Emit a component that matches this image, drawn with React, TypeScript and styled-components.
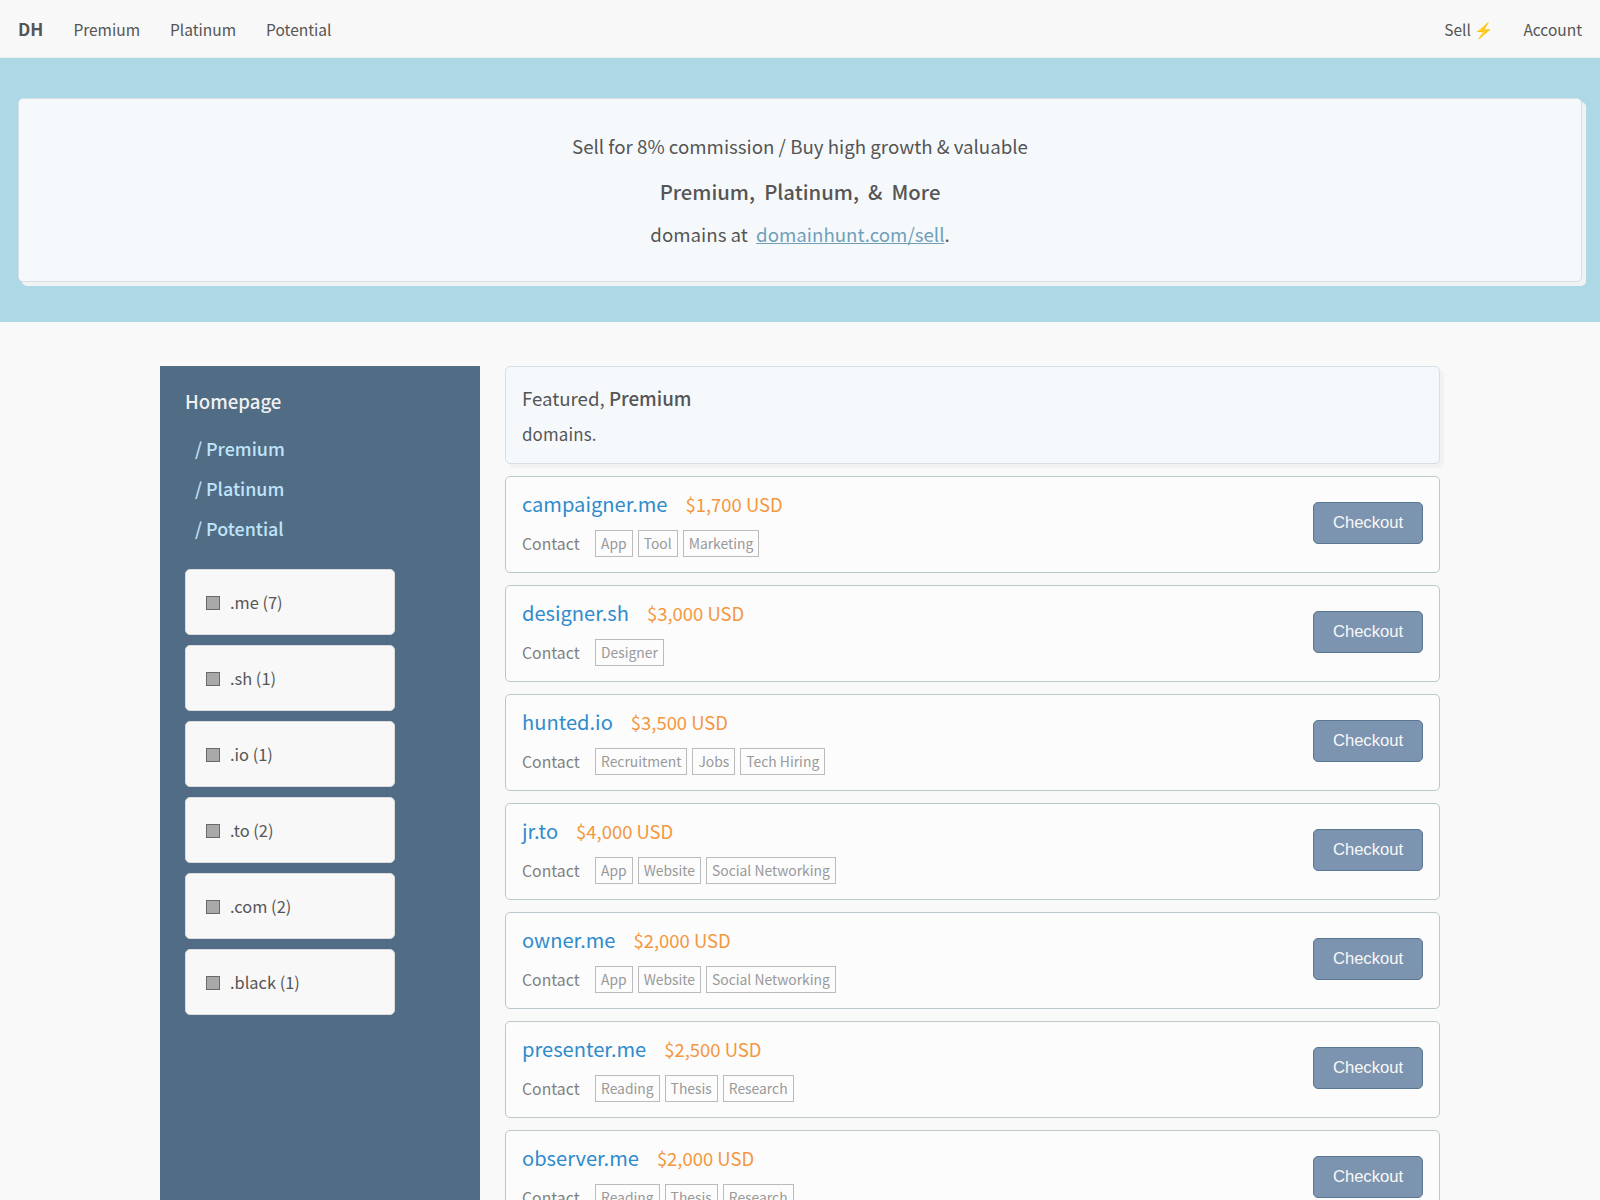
import React from "react";
import styled, { createGlobalStyle } from "styled-components";

const Global = createGlobalStyle`
  * { box-sizing: border-box; }
  html, body { margin: 0; background: #f9f9f9; }
  body { font-family: "Noto Sans CJK SC", "Liberation Sans", sans-serif; color: #555; height: 1200px; overflow: hidden; }
`;

const Nav = styled.nav`
  display: flex;
  align-items: baseline;
  height: 58px;
  padding: 17px 18px 0;
  gap: 30px;
  font-size: 15.5px;
  line-height: 24px;
  background: #f8f8f8;
  border-bottom: 1px solid #ececec;
`;
const Brand = styled.span`
  font-size: 17.25px;
  line-height: 23px;
  font-weight: 700;
`;
const NavLink = styled.span<{ $push?: boolean }>`
  margin-left: ${(p) => (p.$push ? "auto" : "0")};
`;

const Hero = styled.section`
  height: 264px;
  padding: 40px 18px;
  background: #add8e6;
`;
const HeroCard = styled.div`
  display: flex;
  flex-direction: column;
  align-items: center;
  height: 184px;
  padding-top: 25px;
  background: #f5f9fc;
  border: 1px solid #d7dfe3;
  border-radius: 5px;
  box-shadow: 4px 4px 0 #f0f2f4;
`;
const HeroLine = styled.p<{ $height: number; $strong?: boolean }>`
  margin: 0;
  line-height: ${(p) => p.$height}px;
  font-size: ${(p) => (p.$strong ? 20.3 : 18.72)}px;
  font-weight: ${(p) => (p.$strong ? 500 : 400)};
`;
const HeroLink = styled.a`
  margin-left: 4px;
  color: #719fb8;
  text-decoration: underline;
`;

const Main = styled.main`
  display: flex;
  gap: 25px;
  width: 1280px;
  margin: 44px auto 0;
`;
const Sidebar = styled.aside`
  width: 320px;
  height: 834px;
  padding: 13px 25px;
  background: #516d85;
`;
const SideTitle = styled.div`
  margin-bottom: 5px;
  font-size: 18.6px;
  line-height: 44px;
  font-weight: 500;
  color: #f0f0f0;
`;
const SideLink = styled.div`
  padding-left: 10px;
  font-size: 17.9px;
  line-height: 40px;
  font-weight: 500;
  color: #bfe3fa;
`;
const Filters = styled.div`
  display: flex;
  flex-direction: column;
  gap: 10px;
  width: 210px;
  margin-top: 21px;
`;
const Filter = styled.div`
  display: flex;
  align-items: center;
  gap: 10px;
  height: 66px;
  padding-left: 20px;
  background: #f8f8f8;
  border: 1px solid #dcdcdc;
  border-radius: 5px;
  font-size: 16.4px;
`;
const Box = styled.i`
  width: 14px;
  height: 14px;
  margin-top: 2px;
  background: #a9a9a9;
  border: 1px solid #696969;
`;

const Column = styled.div`
  flex: 1;
  display: flex;
  flex-direction: column;
  gap: 12px;
`;
const Intro = styled.header`
  height: 98px;
  padding: 14px 16px;
  background: #f5f9fc;
  border: 1px solid #d7dfe3;
  border-radius: 5px;
  box-shadow: 4px 4px 0 #f1f2f4;
`;
const IntroTitle = styled.div`
  height: 34px;
  font-size: 18.65px;
  line-height: 33px;
`;
const IntroStrong = styled.span`
  font-size: 18.75px;
  font-weight: 500;
`;
const IntroText = styled.div`
  font-size: 16.9px;
  line-height: 37px;
  letter-spacing: 0.15px;
`;

const Card = styled.article`
  display: flex;
  align-items: center;
  justify-content: space-between;
  height: 97px;
  padding: 0 16px;
  background: #fcfcfc;
  border: 1px solid #bcc8cc;
  border-radius: 5px;
`;
const TitleRow = styled.div`
  display: flex;
  align-items: baseline;
  gap: 18px;
  height: 38px;
  line-height: 34px;
`;
const TagRow = styled.div`
  display: flex;
  align-items: center;
  gap: 5px;
  height: 38px;
`;
const Name = styled.span`
  font-size: 20.1px;
  color: #2f8bcc;
`;
const Price = styled.span`
  font-size: 18.45px;
  color: #f4973f;
`;
const Contact = styled.span`
  width: 68px;
  font-size: 15.8px;
  color: #808080;
`;
const Tag = styled.span`
  padding: 0 5px 1px;
  font-size: 13.86px;
  line-height: 24px;
  color: #999;
  border: 1px solid #bbb;
`;
const Button = styled.button`
  width: 110px;
  height: 42px;
  margin-bottom: 3px;
  padding: 0;
  background: #7c94af;
  border: 1px solid #5b7893;
  border-radius: 5px;
  color: #f8f8f8;
  font: 16.64px "Liberation Sans", Arial, sans-serif;
`;

const filters = [".me (7)", ".sh (1)", ".io (1)", ".to (2)", ".com (2)", ".black (1)"];
const domains: [string, string, string[]][] = [
  ["campaigner.me", "$1,700 USD", ["App", "Tool", "Marketing"]],
  ["designer.sh", "$3,000 USD", ["Designer"]],
  ["hunted.io", "$3,500 USD", ["Recruitment", "Jobs", "Tech Hiring"]],
  ["jr.to", "$4,000 USD", ["App", "Website", "Social Networking"]],
  ["owner.me", "$2,000 USD", ["App", "Website", "Social Networking"]],
  ["presenter.me", "$2,500 USD", ["Reading", "Thesis", "Research"]],
  ["observer.me", "$2,000 USD", ["Reading", "Thesis", "Research"]],
];

export default function App() {
  return (
    <>
      <Global />
      <Nav>
        <Brand>DH</Brand>
        <NavLink>Premium</NavLink>
        <NavLink>Platinum</NavLink>
        <NavLink>Potential</NavLink>
        <NavLink $push>Sell ⚡</NavLink>
        <NavLink>Account</NavLink>
      </Nav>
      <Hero>
        <HeroCard>
          <HeroLine $height={43}>Sell for 8% commission / Buy high growth &amp; valuable</HeroLine>
          <HeroLine $height={48} $strong>Premium,&nbsp; Platinum,&nbsp; &amp;&nbsp; More</HeroLine>
          <HeroLine $height={37}>domains at <HeroLink>domainhunt.com/sell</HeroLink>.</HeroLine>
        </HeroCard>
      </Hero>
      <Main>
        <Sidebar>
          <SideTitle>Homepage</SideTitle>
          <SideLink>/ Premium</SideLink>
          <SideLink>/ Platinum</SideLink>
          <SideLink>/ Potential</SideLink>
          <Filters>
            {filters.map((f) => (
              <Filter key={f}><Box />{f}</Filter>
            ))}
          </Filters>
        </Sidebar>
        <Column>
          <Intro>
            <IntroTitle>Featured, <IntroStrong>Premium</IntroStrong></IntroTitle>
            <IntroText>domains.</IntroText>
          </Intro>
          {domains.map(([name, price, tags]) => (
            <Card key={name}>
              <div>
                <TitleRow><Name>{name}</Name><Price>{price}</Price></TitleRow>
                <TagRow><Contact>Contact</Contact>{tags.map((t) => <Tag key={t}>{t}</Tag>)}</TagRow>
              </div>
              <Button>Checkout</Button>
            </Card>
          ))}
        </Column>
      </Main>
    </>
  );
}
